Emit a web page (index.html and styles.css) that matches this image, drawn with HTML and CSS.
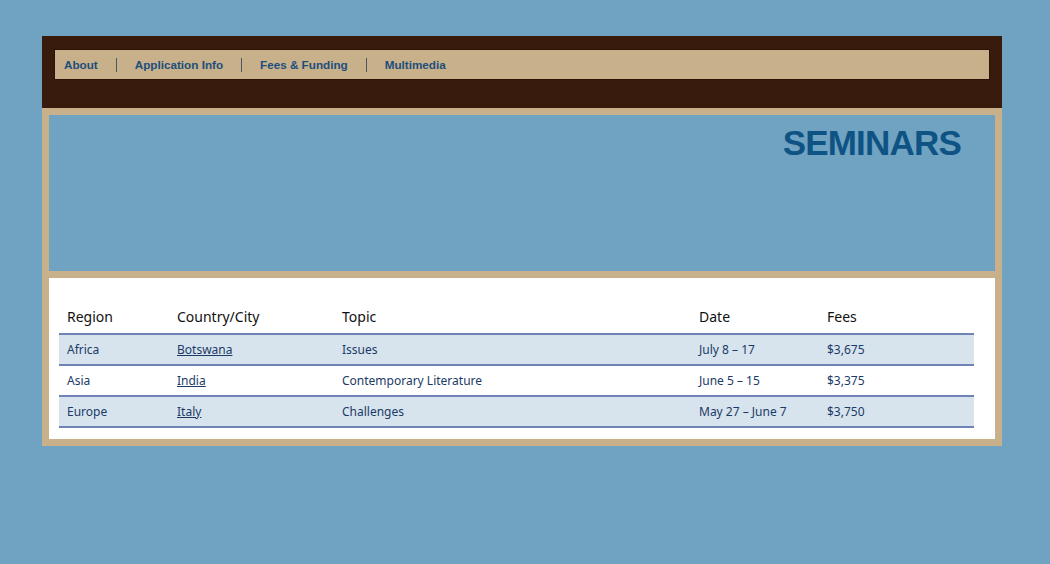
FILE: index.html
```html
<!DOCTYPE html>
<html>
<head>
<meta charset="utf-8">
<link rel="stylesheet" href="styles.css">
</head>
<body>
<div class="page">
  <div class="header">
    <ul class="nav">
      <li><a href="#">About</a></li>
      <li class="sep"></li>
      <li><a href="#">Application Info</a></li>
      <li class="sep"></li>
      <li><a href="#">Fees &amp; Funding</a></li>
      <li class="sep"></li>
      <li><a href="#">Multimedia</a></li>
    </ul>
  </div>
  <div class="frame">
    <div class="banner"><h1>SEMINARS</h1></div>
    <div class="content">
      <table class="seminars">
        <colgroup>
          <col class="c1"><col class="c2"><col class="c3"><col class="c4"><col class="c5">
        </colgroup>
        <thead>
          <tr><th>Region</th><th>Country/City</th><th>Topic</th><th>Date</th><th>Fees</th></tr>
        </thead>
        <tbody>
          <tr class="alt"><td>Africa</td><td><a href="#">Botswana</a></td><td>Issues</td><td>July 8 – 17</td><td>$3,675</td></tr>
          <tr><td>Asia</td><td><a href="#">India</a></td><td>Contemporary Literature</td><td>June 5 – 15</td><td>$3,375</td></tr>
          <tr class="alt"><td>Europe</td><td><a href="#">Italy</a></td><td>Challenges</td><td>May 27 – June 7</td><td>$3,750</td></tr>
        </tbody>
      </table>
    </div>
  </div>
</div>
</body>
</html>
```
FILE: styles.css
```css
html, body {
  margin: 0;
  padding: 0;
}
body {
  background: #6fa3c1;
  font-family: "Noto Sans", "DejaVu Sans", sans-serif;
}
.page {
  width: 960px;
  margin: 36px 0 0 42px;
}
.header {
  background: #381b0c;
  padding: 13px 12px 28px 12px;
}
.nav {
  list-style: none;
  margin: 0;
  padding: 0 0 0 9px;
  height: 29px;
  background: #c8b08a;
  border: 1px solid #2a1408;
  display: flex;
  align-items: center;
  font-family: "Liberation Sans", Arial, sans-serif;
  font-weight: bold;
  font-size: 11.7px;
}
.nav a {
  color: #1c4e7c;
  text-decoration: none;
}
.nav .sep {
  width: 1px;
  height: 14px;
  background: #4a5866;
  margin: 0 18px;
}
.frame {
  background: #c8b08a;
  padding: 7px;
}
.banner {
  background: #6fa3c1;
  height: 156px;
  display: flex;
  justify-content: flex-end;
  align-items: flex-start;
}
.banner h1 {
  margin: 8px 34px 0 0;
  font-family: "Liberation Sans", Arial, sans-serif;
  font-weight: bold;
  font-size: 35px;
  letter-spacing: -0.8px;
  color: #0e5384;
}
.content {
  background: #fff;
  margin-top: 7px;
  padding: 22px 21px 11px 10px;
}
.seminars {
  width: 915px;
  border-collapse: collapse;
  table-layout: fixed;
}
.c1 { width: 110px; }
.c2 { width: 165px; }
.c3 { width: 357px; }
.c4 { width: 128px; }
.c5 { width: 155px; }
.seminars th {
  text-align: left;
  font-weight: normal;
  font-size: 14px;
  color: #111;
  height: 33px;
  padding: 0 8px;
  vertical-align: middle;
  border-bottom: 2px solid #7083b6;
}
.seminars td {
  font-size: 12px;
  color: #1b3a66;
  height: 29px;
  padding: 0 8px;
  vertical-align: middle;
  border-bottom: 2px solid #7083b6;
}
.seminars tr.alt td {
  background: #d7e4ee;
}
.seminars td a {
  color: #1b3a66;
  text-decoration: underline;
}
```
